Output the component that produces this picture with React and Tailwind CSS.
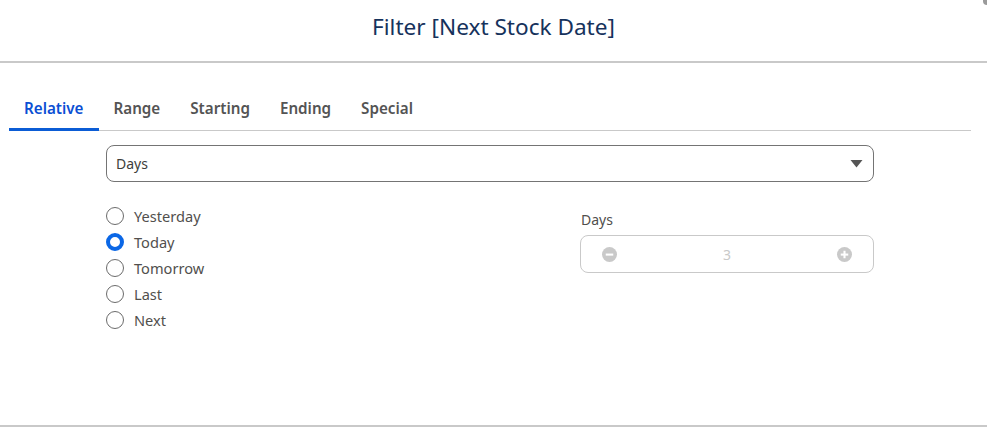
import React from "react";

const font = { fontFamily: '"Noto Sans", "Open Sans", Arial, sans-serif' };

function Radio({ label, checked }) {
  return (
    <div className="flex items-center h-[26px]">
      {checked ? (
        <span className="w-[18px] h-[18px] rounded-full border-[4px] border-[#0b67e6] bg-white box-border" />
      ) : (
        <span className="w-[18px] h-[18px] rounded-full border border-[#6b6b6b] bg-white box-border" />
      )}
      <span className="ml-[10px] text-[14.6px] text-[#514f4d] leading-none">{label}</span>
    </div>
  );
}

export default function App() {
  const tabs = ["Relative", "Range", "Starting", "Ending", "Special"];
  return (
    <div className="w-[987px] h-[430px] bg-white relative overflow-hidden" style={font}>
      <div className="h-[63px] flex items-center justify-center border-b-2 border-[#c9c9c9]">
        <h1 className="text-[22.6px] text-[#16325c] font-normal pb-[7px]">Filter [Next Stock Date]</h1>
      </div>
      <div className="absolute top-0 right-0 w-[4px] h-[5px] bg-[#9a9a9a] rounded-bl-full" />
      <div className="pl-[9px] pr-[16px]">
        <div className="flex border-b border-[#c9c9c9] mt-[31px]">
          {tabs.map((t, i) => (
            <div
              key={t}
              className={
                "px-[15px] h-[37px] pb-[6px] flex items-center text-[15.2px] font-semibold -mb-px border-b-[3px] " +
                (i === 0 ? "text-[#0b4fd4] border-[#0b5cd5]" : "text-[#545454] border-transparent")
              }
            >
              {t}
            </div>
          ))}
        </div>
        <div className="px-[97px] pt-[14px]">
          <div className="h-[37px] border border-[#747474] rounded-[8px] flex items-center justify-between pl-[9px] pr-[10px]">
            <span className="text-[14px] text-[#3e3e3c]">Days</span>
            <svg width="13" height="9" viewBox="0 0 13 9">
              <path d="M0.5 1 L12.5 1 L6.5 8.5 Z" fill="#555" />
            </svg>
          </div>
          <div className="flex mt-[21px]">
            <div className="w-[474px]">
              <Radio label="Yesterday" />
              <Radio label="Today" checked />
              <Radio label="Tomorrow" />
              <Radio label="Last" />
              <Radio label="Next" />
            </div>
            <div className="flex-1 pt-[10px]">
              <div className="text-[14px] text-[#514f4d] leading-none mb-[8px] ml-px">Days</div>
              <div className="h-[38px] border border-[#c9c9c9] rounded-[8px] flex items-center justify-between px-[21px]">
                <svg width="15" height="15" viewBox="0 0 16 16">
                  <circle cx="8" cy="8" r="8" fill="#c9c9c9" />
                  <rect x="4" y="7" width="8" height="2.2" fill="#fff" />
                </svg>
                <span className="text-[14px] text-[#c9c9c9]">3</span>
                <svg width="15" height="15" viewBox="0 0 16 16">
                  <circle cx="8" cy="8" r="8" fill="#c9c9c9" />
                  <rect x="4" y="7" width="8" height="2.2" fill="#fff" />
                  <rect x="6.9" y="4" width="2.2" height="8" fill="#fff" />
                </svg>
              </div>
            </div>
          </div>
        </div>
      </div>
      <div className="absolute left-0 right-0 bottom-[3px] h-[2px] bg-[#c9c9c9]" />
    </div>
  );
}
